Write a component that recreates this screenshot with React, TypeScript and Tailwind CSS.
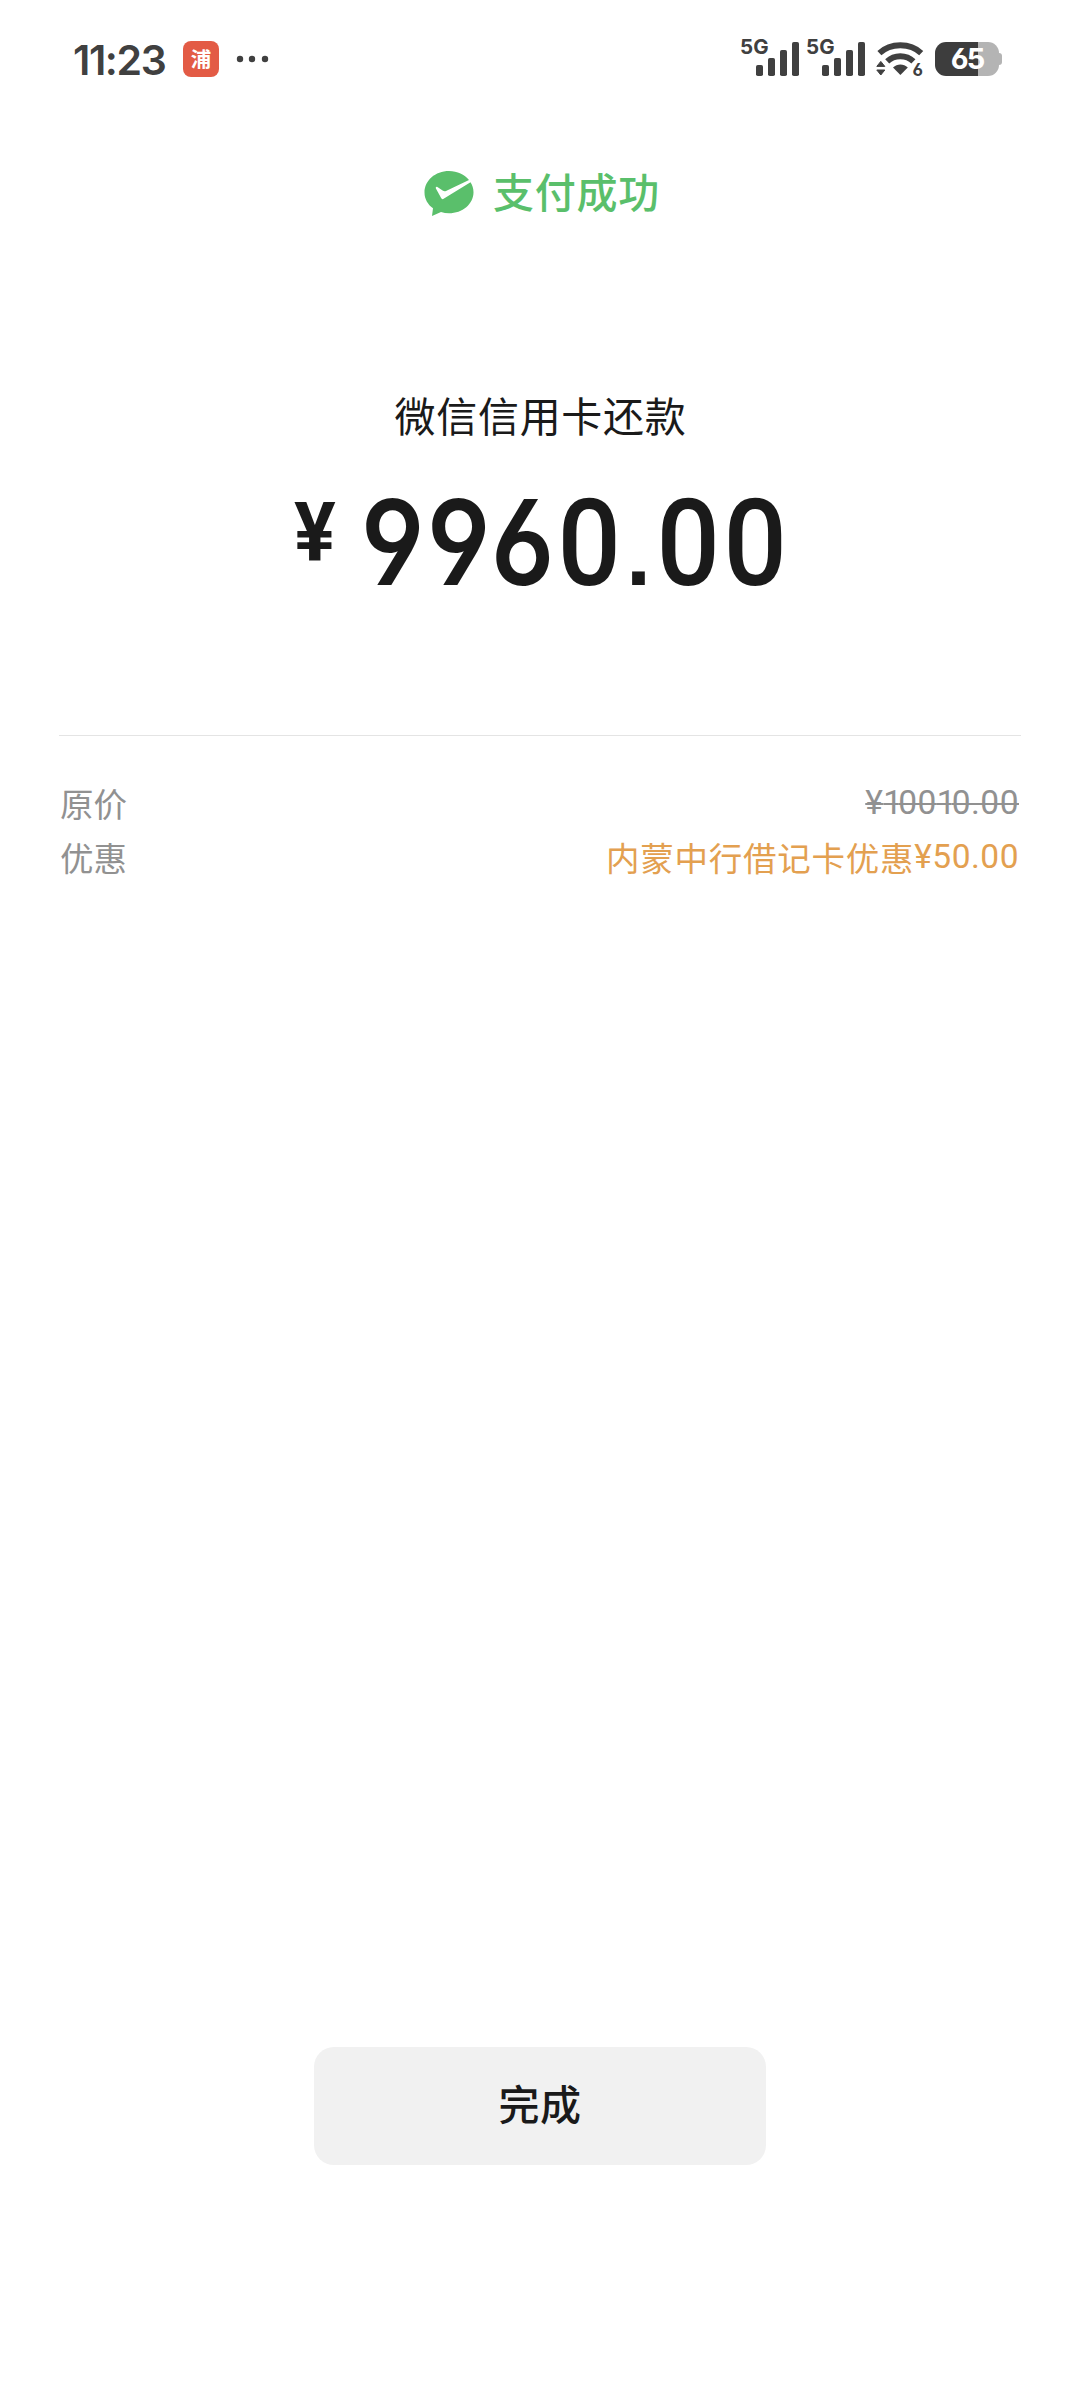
import React from 'react';

interface DetailRowProps {
  label: string;
  children: React.ReactNode;
}

const SignalBars: React.FC = () => (
  <div className="flex w-[59px] h-[40px] flex-shrink-0">
    <span className="w-[16px] font-['Inter',sans-serif] font-bold text-[20.5px] leading-[22px] tracking-[0.2px]">5G</span>
    <svg className="w-[43px] h-[40px]" viewBox="0 0 43 40" fill="currentColor">
      <rect x="0" y="29" width="7" height="11" rx="1.8" />
      <rect x="12" y="22" width="7" height="18" rx="1.8" />
      <rect x="24" y="14" width="7" height="26" rx="1.8" />
      <rect x="36" y="6" width="7" height="34" rx="1.8" />
    </svg>
  </div>
);

const WifiIcon: React.FC = () => (
  <svg className="w-[48px] h-[36px] flex-shrink-0 overflow-visible" viewBox="0 0 48 36">
    <g fill="none" stroke="#404040" strokeWidth="5.8">
      <path d="M3.4 12.2C14.5 1.6 34.3 1.6 45.2 12.2" />
      <path d="M11.2 20.4C18.2 13.5 30.4 13.5 37.4 20.4" />
    </g>
    <path fill="#404040" d="M17 26.4C21.2 22.4 27.6 22.4 31.8 26.4L24.4 34z" />
    <path fill="#404040" stroke="#404040" strokeWidth="1" strokeLinejoin="round" d="M4.8 20.4L8.8 25.4H.8zM4.8 34L8.8 29H.8z" />
    <text x="36.6" y="35.2" fill="#404040" className="font-['Inter',sans-serif] font-bold text-[17px] [font-feature-settings:'cv03']">6</text>
  </svg>
);

const Battery: React.FC = () => (
  <div className="flex items-center flex-shrink-0">
    <div className="w-[64px] h-[34px] rounded-[11px] bg-linear-to-r from-[#3d3d3d] from-[67%] to-[#b4b4b4] to-[67%] flex items-center justify-center">
      <span className="font-['Inter',sans-serif] font-bold text-[29px] leading-[34px] tracking-[-2px] text-white [font-feature-settings:'cv03']">65</span>
    </div>
    <div className="w-[3px] h-[12px] rounded-r-[3px] bg-[#b4b4b4]"></div>
  </div>
);

const StatusBar: React.FC = () => (
  <header className="h-[118px] pt-[36px] pl-[73px] pr-[78px] flex justify-between text-[#404040]">
    <div className="flex items-center h-[46px]">
      <span className="w-[110px] pt-px font-['Inter',sans-serif] font-semibold text-[41px] leading-[46px] tracking-[-1.4px]">11:23</span>
      <div className="w-[36px] h-[36px] rounded-[8px] bg-[#e35b45] flex items-center justify-center">
        <span className="font-['Noto_Sans_CJK_SC',sans-serif] font-bold text-[20.5px] leading-[36px] text-white pb-[3px]">浦</span>
      </div>
      <svg className="ml-[17px] w-[34px] h-[8px]" viewBox="0 0 34 8" fill="currentColor">
        <circle cx="4" cy="4" r="3.2" />
        <circle cx="16" cy="4" r="3.2" />
        <circle cx="29" cy="4" r="3.2" />
      </svg>
    </div>
    <div className="flex">
      <SignalBars />
      <div className="ml-[7px]"><SignalBars /></div>
      <div className="ml-[11px] mt-[5px]"><WifiIcon /></div>
      <div className="ml-[11px] mt-[6px]"><Battery /></div>
    </div>
  </header>
);

const PayLogo: React.FC = () => (
  <svg className="w-[50px] h-[46px]" viewBox="0 0 50 46">
    <path fill="#5abf6b" d="M25 0C11.3 0 .5 9.5 .5 21.5C.5 28 3.8 33.5 9 37.3L8 45L17 41C19.5 41.8 22.3 42.2 25 42.2C38.5 42.2 49.5 33 49.5 21.2C49.5 17.5 48.4 14.2 46.5 11.2L20 27.6C18.6 28.5 17.7 28.3 17 26.8L11.9 17.4C11.4 16.3 12.3 15.4 13.4 16L19 19.8C20 20.4 21 20.4 22 20L45 9C40.5 3.5 33.5 0 25 0z" />
  </svg>
);

const amount = '9960.00';

const Amount: React.FC = () => (
  <div className="pl-[294px] h-[120px] flex text-[120px] leading-[120px]">
    <span className="w-[61.4px] pt-[1px] font-['Roboto',sans-serif] font-bold text-[82px] leading-[96px]">
      <span className="inline-block origin-left scale-x-[0.95]">¥</span>
    </span>
    {amount.split('').map((char, i) => {
      if (char === '.') {
        return (
          <span key={i} className="w-[32.6px] pt-[11px] flex justify-center font-['Liberation_Sans',sans-serif] font-bold text-[90px]">{char}</span>
        );
      }
      if (char === '0') {
        return (
          <span key={i} className="w-[66.7px] pt-[1px] flex justify-center font-['Roboto',sans-serif] font-medium">
            <span className="scale-x-[0.93]">{char}</span>
          </span>
        );
      }
      // open six and nine
      return (
        <span key={i} className={`w-[66.7px] flex justify-center font-['Inter',sans-serif] font-semibold text-[118px] leading-[118px] [font-feature-settings:'cv03','cv04'] ${char === '9' ? 'pl-[7px]' : 'pl-[1px]'}`}>
          <span className="scale-x-[0.89]">{char}</span>
        </span>
      );
    })}
  </div>
);

const DetailRow: React.FC<DetailRowProps> = ({ label, children }) => (
  <div className="h-[54px] flex items-center justify-between leading-[54px]">
    <span className="pb-[1px] text-[33.5px] text-[#919191]">{label}</span>
    {children}
  </div>
);

const App: React.FC = () => {
  return (
    <div className="w-[1080px] h-[2400px] bg-white flex flex-col font-['Noto_Sans_CJK_SC',sans-serif] text-[#1a1a1a] overflow-hidden">
      <StatusBar />

      {/* Result */}
      <div className="mt-[48px] pl-[4px] h-[50px] flex items-center justify-center gap-[19px]">
        <div className="pt-[6px]"><PayLogo /></div>
        <span className="font-medium text-[41px] leading-[50px] tracking-[0.7px] pb-[2px] text-[#5abf6b]">支付成功</span>
      </div>

      {/* Amount */}
      <h1 className="mt-[173px] pl-[1px] h-[50px] text-center text-[41px] leading-[50px] tracking-[0.7px]">微信信用卡还款</h1>
      <div className="mt-[44px]"><Amount /></div>

      {/* Price details */}
      <div className="mt-[132px] mx-[59px] border-t border-[#e4e4e4] pt-[40px] pl-[1px] pr-[2px]">
        <DetailRow label="原价">
          <span className="font-['Roboto',sans-serif] text-[33.5px] tracking-[0.5px] text-[#919191] line-through decoration-2">
            ¥<span className="tracking-[-4px]">1</span>00<span className="tracking-[-4px]">1</span>0.00
          </span>
        </DetailRow>
        <DetailRow label="优惠">
          <span className="flex text-[#e3a050]">
            <span className="pb-[1px] text-[33.5px] tracking-[0.75px]">内蒙中行借记卡优惠</span>
            <span className="font-['Roboto',sans-serif] text-[33.5px] tracking-[0.5px]">¥50.00</span>
          </span>
        </DetailRow>
      </div>

      <button className="mt-auto mb-[235px] mx-auto w-[452px] h-[118px] rounded-[20px] bg-[#f1f1f1] pb-[8px] font-medium text-[41px] tracking-[0.5px] leading-[110px]">完成</button>
    </div>
  );
};

export default App;
